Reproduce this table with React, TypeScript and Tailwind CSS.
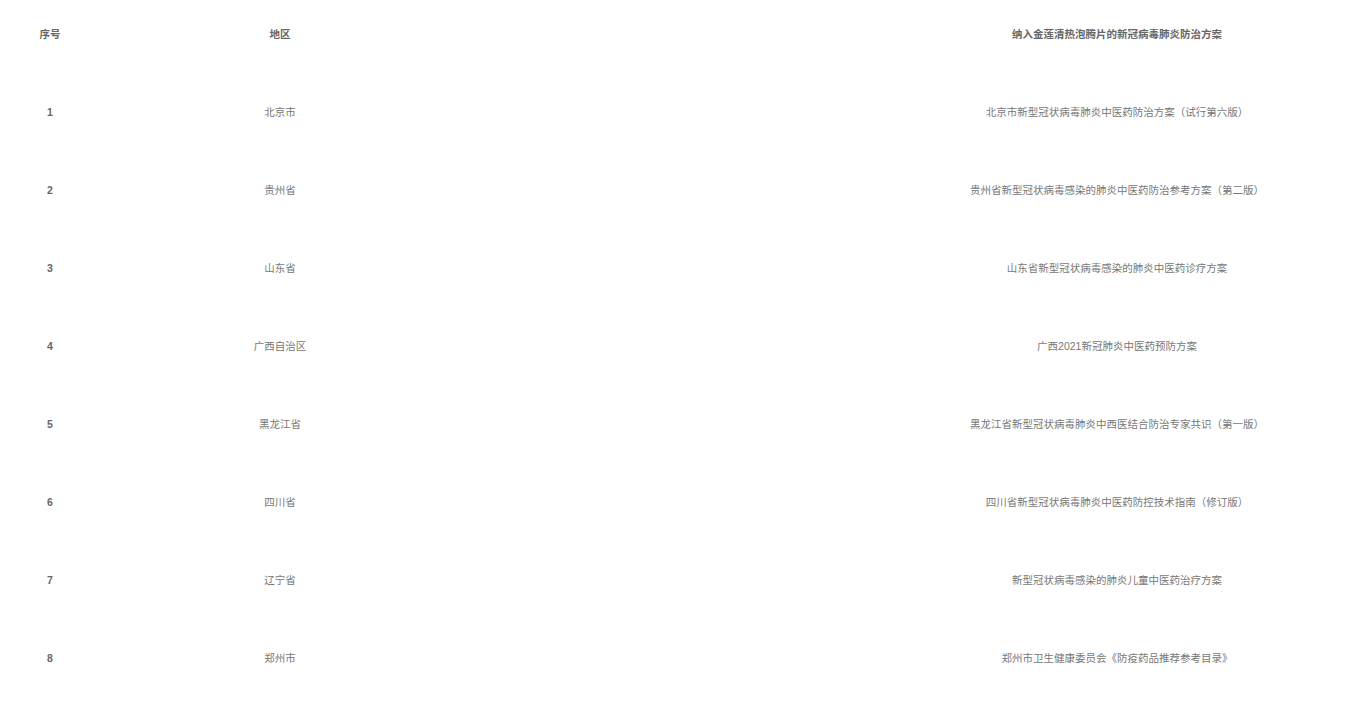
import React from "react";

const rows: [string, string, string][] = [
  ["1", "北京市", "北京市新型冠状病毒肺炎中医药防治方案（试行第六版）"],
  ["2", "贵州省", "贵州省新型冠状病毒感染的肺炎中医药防治参考方案（第二版）"],
  ["3", "山东省", "山东省新型冠状病毒感染的肺炎中医药诊疗方案"],
  ["4", "广西自治区", "广西2021新冠肺炎中医药预防方案"],
  ["5", "黑龙江省", "黑龙江省新型冠状病毒肺炎中西医结合防治专家共识（第一版）"],
  ["6", "四川省", "四川省新型冠状病毒肺炎中医药防控技术指南（修订版）"],
  ["7", "辽宁省", "新型冠状病毒感染的肺炎儿童中医药治疗方案"],
  ["8", "郑州市", "郑州市卫生健康委员会《防疫药品推荐参考目录》"],
];

const font = { fontFamily: '"Liberation Sans", Arial, "Noto Sans CJK SC", sans-serif' };

export default function App() {
  return (
    <div className="w-[1366px] h-[703px] overflow-hidden bg-white text-[#777] text-[10.5px] leading-[18px]" style={font}>
      <div className="grid grid-cols-[100px_360px_408px_498px] h-[78px] pt-[25px] font-bold text-[#666]">
        <div className="text-center">序号</div>
        <div className="text-center">地区</div>
        <div />
        <div className="text-center">纳入金莲清热泡腾片的新冠病毒肺炎防治方案</div>
      </div>
      {rows.map(([n, r, p]) => (
        <div key={n} className="grid grid-cols-[100px_360px_408px_498px] h-[78px] pt-[25px]">
          <div className="text-center font-bold text-[#666]">{n}</div>
          <div className="text-center">{r}</div>
          <div />
          <div className="text-center">{p}</div>
        </div>
      ))}
    </div>
  );
}
